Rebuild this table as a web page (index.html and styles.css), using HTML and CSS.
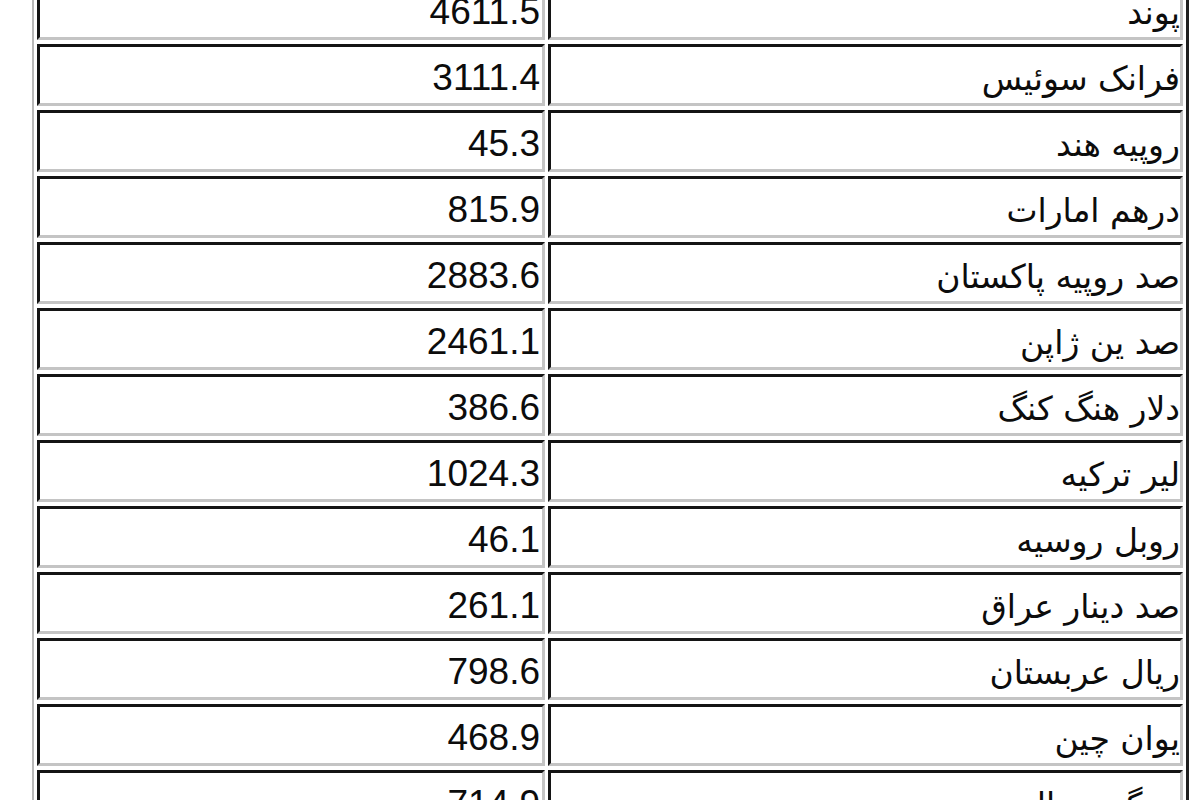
FILE: index.html
```html
<!DOCTYPE html>
<html lang="fa">
<head>
<meta charset="utf-8">
<title>نرخ ارز</title>
<link rel="stylesheet" href="styles.css">
</head>
<body>
<table class="rates">
  <tbody>
    <tr><td class="val">4611.5</td><td class="name">پوند</td></tr>
    <tr><td class="val">3111.4</td><td class="name">فرانک سوئیس</td></tr>
    <tr><td class="val">45.3</td><td class="name">روپیه هند</td></tr>
    <tr><td class="val">815.9</td><td class="name">درهم امارات</td></tr>
    <tr><td class="val">2883.6</td><td class="name">صد روپیه پاکستان</td></tr>
    <tr><td class="val">2461.1</td><td class="name">صد ین ژاپن</td></tr>
    <tr><td class="val">386.6</td><td class="name">دلار هنگ کنگ</td></tr>
    <tr><td class="val">1024.3</td><td class="name">لیر ترکیه</td></tr>
    <tr><td class="val">46.1</td><td class="name">روبل روسیه</td></tr>
    <tr><td class="val">261.1</td><td class="name">صد دینار عراق</td></tr>
    <tr><td class="val">798.6</td><td class="name">ریال عربستان</td></tr>
    <tr><td class="val">468.9</td><td class="name">یوان چین</td></tr>
    <tr><td class="val">714.9</td><td class="name">رینگیت مالزی</td></tr>
  </tbody>
</table>
</body>
</html>
```

FILE: styles.css
```css
html, body {
  margin: 0;
  padding: 0;
  background: #ffffff;
  overflow: hidden;
}

.rates {
  margin: -28px 0 0 32px;
  width: 1157px;
  border-collapse: separate;
  border-spacing: 3px 4px;
  border-style: solid;
  border-width: 2px 3px 3px 2px;
  border-color: #b8b8b8 #1e1e1e #1e1e1e #b8b8b8;
  font-family: "Liberation Sans", "DejaVu Sans", sans-serif;
  color: #0c0c0c;
}

.rates td {
  height: 62px;
  box-sizing: border-box;
  border-style: solid;
  border-width: 3px;
  border-color: #141414 #c4c4c4 #c4c4c4 #141414;
  padding: 6px 2px 0 2px;
  vertical-align: middle;
  text-align: right;
  white-space: nowrap;
}

.rates .val {
  width: 508px;
  font-size: 37px;
}

.rates .name {
  direction: rtl;
  font-family: "DejaVu Sans", sans-serif;
  font-size: 33px;
  padding-right: 0;
}
```
